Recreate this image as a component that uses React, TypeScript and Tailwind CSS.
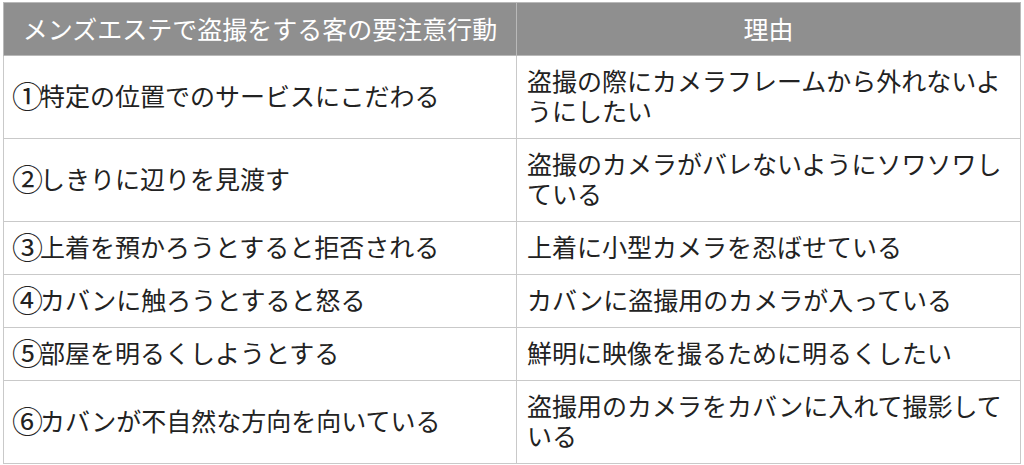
const rows = [
  {
    num: '①',
    behavior: '特定の位置でのサービスにこだわる',
    reason: '盗撮の際にカメラフレームから外れないようにしたい',
  },
  {
    num: '②',
    behavior: 'しきりに辺りを見渡す',
    reason: '盗撮のカメラがバレないようにソワソワしている',
  },
  {
    num: '③',
    behavior: '上着を預かろうとすると拒否される',
    reason: '上着に小型カメラを忍ばせている',
  },
  {
    num: '④',
    behavior: 'カバンに触ろうとすると怒る',
    reason: 'カバンに盗撮用のカメラが入っている',
  },
  {
    num: '⑤',
    behavior: '部屋を明るくしようとする',
    reason: '鮮明に映像を撮るために明るくしたい',
  },
  {
    num: '⑥',
    behavior: 'カバンが不自然な方向を向いている',
    reason: '盗撮用のカメラをカバンに入れて撮影している',
  },
]

export default function App() {
  return (
    <div className="bg-white w-[1024px] h-[465px] pt-[2px] pl-[3px] font-['Noto_Sans_CJK_JP','Noto_Sans',sans-serif] text-[25px] leading-[30px] text-[#222222]">
      <table className="border-collapse w-[1017px] table-fixed">
        <colgroup>
          <col className="w-[513px]" />
          <col className="w-[504px]" />
        </colgroup>
        <thead>
          <tr className="bg-[#8f8f8f] text-white">
            <th className="border border-[#b9b9b9] h-[53px] pb-[3px] font-normal text-center px-2">
              メンズエステで盗撮をする客の要注意行動
            </th>
            <th className="border border-[#b9b9b9] h-[53px] pb-[3px] font-normal text-center px-2">
              理由
            </th>
          </tr>
        </thead>
        <tbody>
          {rows.map((row) => (
            <tr key={row.num}>
              <td className="border border-[#c9c9c9] pl-[8px] pr-2 pt-[9px] pb-[13px] align-middle whitespace-nowrap">
                <span className="inline-block w-[28px] text-[31px] leading-[30px] align-top">{row.num}</span>
                {row.behavior}
              </td>
              <td className="border border-[#c9c9c9] pl-[10px] pr-[10px] pt-[9px] pb-[13px] align-middle">
                {row.reason}
              </td>
            </tr>
          ))}
        </tbody>
      </table>
    </div>
  )
}
